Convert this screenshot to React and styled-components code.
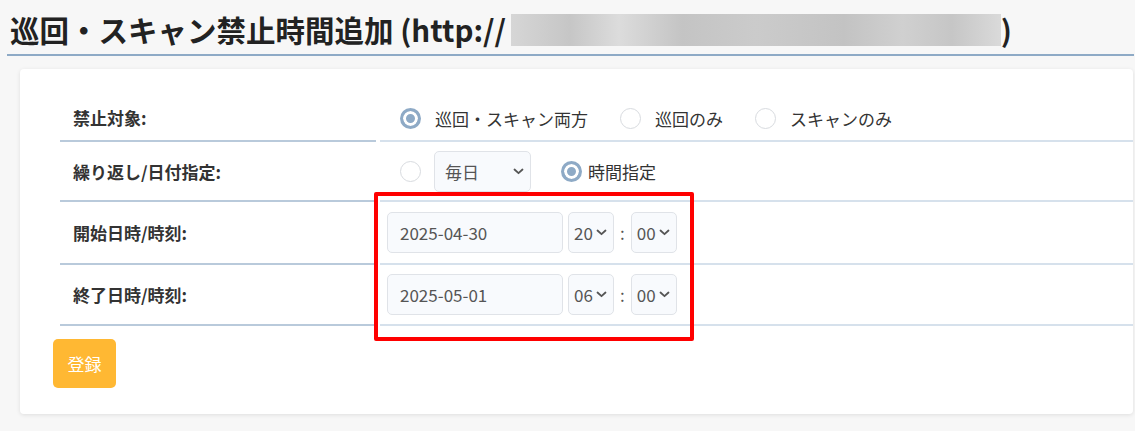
import React from "react"
import styled, { createGlobalStyle } from "styled-components"

const GlobalStyle = createGlobalStyle`
  body {
    margin: 0;
    background: #f7f7f7;
    font-family: "Noto Sans CJK JP", "Noto Sans", sans-serif;
    color: #333;
  }
`

const Page = styled.div`
  padding: 0 1px 16px 0;
`

const Header = styled.div`
  margin-left: 7px;
  padding: 9px 0 4px 3px;
  border-bottom: 2px solid #8eaac6;
`

const Title = styled.h1`
  margin: 0;
  font-size: 29.5px;
  line-height: 41px;
  font-weight: 700;
  color: #222;
  white-space: nowrap;
  display: flex;
  align-items: center;
`

const Blurred = styled.span`
  display: inline-block;
  width: 490px;
  height: 32px;
  margin-left: 5px;
  background: linear-gradient(
    90deg,
    #d6d6d6 0%,
    #c6c6c6 12%,
    #dcdcdc 22%,
    #c4c4c4 35%,
    #cbcbcb 50%,
    #c3c3c3 68%,
    #d0d0d0 80%,
    #c6c6c6 90%,
    #dadada 100%
  );
`

const Card = styled.div`
  position: relative;
  margin: 13px 1px 0 20px;
  padding: 26px 0 26px 33px;
  background: #fff;
  border-radius: 4px;
  box-shadow: 0 1px 4px rgba(0, 0, 0, 0.1);
`

const FormGrid = styled.div`
  margin-left: 7px;
  display: grid;
  grid-template-columns: 316px 1fr;
  column-gap: 4px;
`

const LabelCell = styled.div`
  display: flex;
  align-items: center;
  padding: 0 13px;
  border-bottom: 2px solid #b9cadb;
  font-size: 17px;
  font-weight: 700;
  color: #333;
`

const ValueCell = styled.div`
  display: flex;
  align-items: center;
  min-height: 27px;
  padding: ${p => p.$py || "9px 0 8px"};
  padding-left: 7px;
  border-bottom: 2px solid #d6e1ec;
  font-size: 17px;
`

const RadioOption = styled.label`
  display: inline-flex;
  align-items: center;
  gap: ${p => p.$gap || 14}px;
  margin-left: ${p => p.$ml || 0}px;
  color: #333;
  line-height: 26px;
`

const RadioCircle = styled.span`
  box-sizing: border-box;
  width: 21px;
  height: 21px;
  border-radius: 50%;
  border: ${p => (p.$checked ? "3px solid #8eaac6" : "1px solid #d8dbdf")};
  background: ${p => (p.$checked ? "#8eaac6" : "#fff")};
  box-shadow: ${p => (p.$checked ? "inset 0 0 0 3px #fff" : "none")};
  flex-shrink: 0;
`

const Select = styled.div`
  box-sizing: border-box;
  display: flex;
  align-items: center;
  justify-content: space-between;
  width: ${p => p.$w}px;
  height: 41px;
  margin-left: ${p => p.$ml || 0}px;
  padding: 0 6px 0 ${p => p.$pl || 5}px;
  background: #f8fafd;
  border: 1px solid #e0e3e8;
  border-radius: 5px;
  color: #555;
  font-size: 17px;
`

const DateInput = styled.div`
  box-sizing: border-box;
  display: flex;
  align-items: center;
  width: 176px;
  height: 41px;
  padding-left: 12px;
  background: #f8fafd;
  border: 1px solid #e0e3e8;
  border-radius: 5px;
  color: #555;
  font-size: 17px;
`

const Colon = styled.span`
  margin: 0 6px;
  color: #555;
`

const SubmitButton = styled.button`
  margin-top: 13px;
  width: 63px;
  height: 49px;
  border: none;
  border-radius: 5px;
  background: #ffb833;
  color: #fff;
  font-family: inherit;
  font-size: 17px;
`

const Highlight = styled.div`
  position: absolute;
  left: 354px;
  top: 123px;
  width: 320px;
  height: 149px;
  box-sizing: border-box;
  border: 4px solid #ff0000;
  border-radius: 2px;
  pointer-events: none;
`

const Chevron = () => (
  <svg width="11" height="7" viewBox="0 0 11 7" fill="none">
    <path d="M1.5 1.5 L5.5 5.2 L9.5 1.5" stroke="#555" strokeWidth="1.8" strokeLinecap="round" strokeLinejoin="round" />
  </svg>
)

const Radio = ({ checked, children, gap, ml }) => (
  <RadioOption $gap={gap} $ml={ml}>
    <RadioCircle $checked={checked} />
    {children}
  </RadioOption>
)

const TimePicker = ({ date, hour, minute }) => (
  <>
    <DateInput>{date}</DateInput>
    <Select $w={46} $ml={5}>
      {hour}
      <Chevron />
    </Select>
    <Colon>:</Colon>
    <Select $w={46}>
      {minute}
      <Chevron />
    </Select>
  </>
)

export default function App() {
  return (
    <Page>
      <GlobalStyle />
      <Header>
        <Title>
          巡回・スキャン禁止時間追加 (http://<Blurred />)
        </Title>
      </Header>
      <Card>
        <FormGrid>
          <LabelCell>禁止対象:</LabelCell>
          <ValueCell $py="10px 0 8px">
            <Radio checked ml={13}>巡回・スキャン両方</Radio>
            <Radio ml={32}>巡回のみ</Radio>
            <Radio ml={32}>スキャンのみ</Radio>
          </ValueCell>

          <LabelCell>繰り返し/日付指定:</LabelCell>
          <ValueCell>
            <Radio ml={13} />
            <Select $w={97} $ml={13} $pl={10}>
              毎日
              <Chevron />
            </Select>
            <Radio checked gap={6} ml={30}>時間指定</Radio>
          </ValueCell>

          <LabelCell>開始日時/時刻:</LabelCell>
          <ValueCell $py="10px 0 10px">
            <TimePicker date="2025-04-30" hour="20" minute="00" />
          </ValueCell>

          <LabelCell>終了日時/時刻:</LabelCell>
          <ValueCell $py="9px 0 9px">
            <TimePicker date="2025-05-01" hour="06" minute="00" />
          </ValueCell>
        </FormGrid>
        <SubmitButton>登録</SubmitButton>
        <Highlight />
      </Card>
    </Page>
  )
}
